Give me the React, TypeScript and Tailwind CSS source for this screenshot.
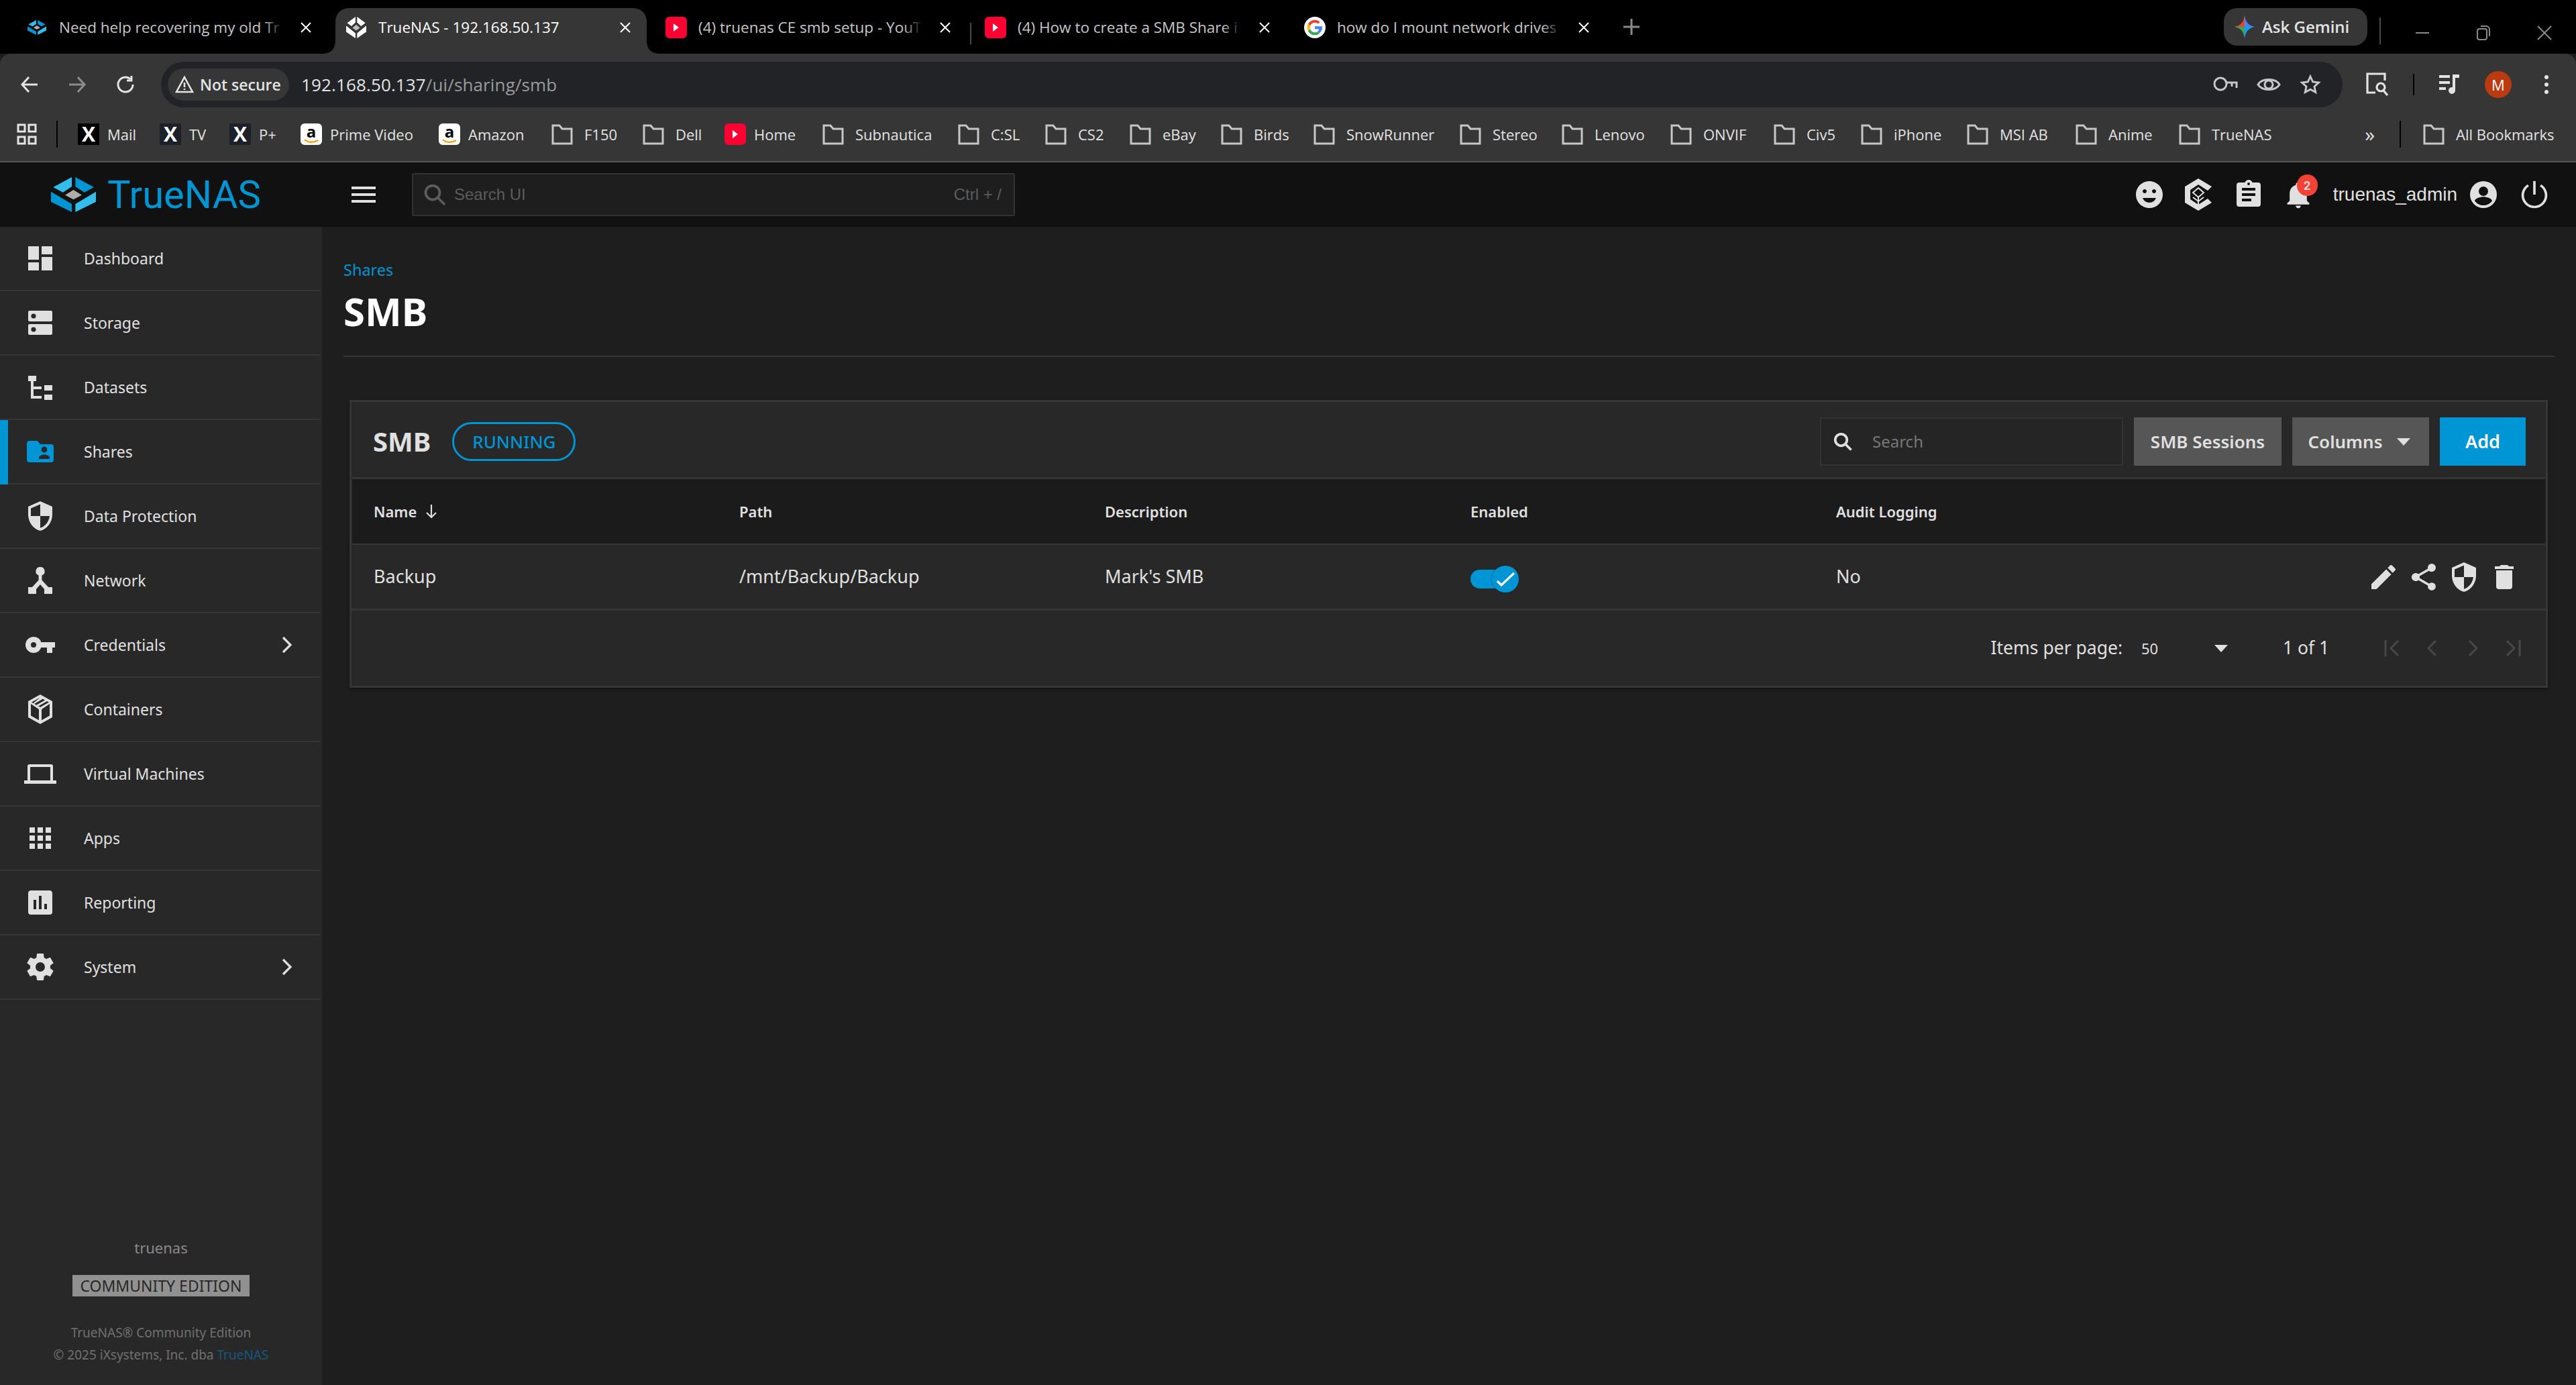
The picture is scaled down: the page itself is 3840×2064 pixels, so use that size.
import type { ReactNode } from "react";

function Svg({ size = 48, box = "0 0 24 24", className = "", children }: { size?: number; box?: string; className?: string; children: ReactNode }) {
  return (
    <svg width={size} height={size} viewBox={box} fill="currentColor" className={`shrink-0 ${className}`}>
      {children}
    </svg>
  );
}

function Logo({ w, h, tone = "brand" }: { w: number; h: number; tone?: "brand" | "white" }) {
  const a = tone === "brand" ? "#31beec" : "#ffffff";
  const b = tone === "brand" ? "#0095d5" : "#ffffff";
  const c = tone === "brand" ? "#aeadae" : "#bdbdbd";
  return (
    <svg width={w} height={h} viewBox="0 0 162 156" className="shrink-0" preserveAspectRatio="none">
      <polygon points="75,0 8,45 43,68 75,42" fill={a} />
      <polygon points="88,0 155,45 120,68 88,42" fill={b} />
      <polygon points="81,57 111,80 81,100 51,80" fill={c} />
      <polygon points="0,65 0,110 75,156 75,120" fill={b} />
      <polygon points="162,65 162,110 88,156 88,120" fill={a} />
    </svg>
  );
}

function YouTubeIcon() {
  return (
    <span className="flex h-8 w-8 shrink-0 items-center justify-center rounded-md bg-[#ff0033]">
      <span className="h-0 w-0 border-y-[6px] border-l-[8px] border-y-transparent border-l-white" />
    </span>
  );
}

function GoogleIcon() {
  return (
    <svg width="32" height="32" viewBox="0 0 48 48" className="shrink-0">
      <circle cx="24" cy="24" r="24" fill="#fff" />
      <path fill="#ea4335" d="M24 13c3 0 5.400 1 7.300 2.800l4.200-4.200C32.700 9 28.800 7 24 7c-6.600 0-12.300 3.800-15.100 9.300l4.900 3.800C15.100 16 19.200 13 24 13z" />
      <path fill="#4285f4" d="M40.600 24.500c0-1.300-.1-2.200-.3-3.200H24v6.200h9.400c-.4 2.200-1.700 4.100-3.700 5.400l4.800 3.700c2.800-2.600 6.100-6.600 6.100-12.100z" />
      <path fill="#fbbc05" d="M13.800 27.900c-.4-1.200-.6-2.500-.6-3.900s.2-2.700.6-3.900l-4.900-3.800C7.700 18.500 7 21.200 7 24s.7 5.500 1.900 7.700z" />
      <path fill="#34a853" d="M24 41c4.700 0 8.500-1.500 10.500-3.900l-4.800-3.700c-1.400 1-3.300 1.600-5.700 1.600-4.800 0-8.900-3-10.200-7.100l-4.900 3.800C11.700 37.200 17.400 41 24 41z" />
    </svg>
  );
}

function Tab({ icon, title, active = false, className = "" }: { icon: ReactNode; title: string; active?: boolean; className?: string }) {
  return (
    <div className={`relative h-[68px] w-[464px] shrink-0 ${active ? "rounded-t-[20px] bg-[#363636] text-white" : "text-[#c7c7c7]"} ${className}`}>
      {active && (
        <>
          <span className="absolute bottom-0 left-[-16px] h-4 w-4 bg-[radial-gradient(circle_at_0_0,transparent_15px,#363636_16px)]" />
          <span className="absolute bottom-0 right-[-16px] h-4 w-4 bg-[radial-gradient(circle_at_100%_0,transparent_15px,#363636_16px)]" />
        </>
      )}
      <div className="flex h-[58px] items-center">
        <div className="flex w-[64px] justify-center pr-[2px]">{icon}</div>
        <div className="relative w-[334px] whitespace-nowrap text-[22.5px]">
          {title}
          {!active && <span className="absolute inset-y-0 right-0 w-[28px] bg-gradient-to-l from-black to-transparent" />}
        </div>
        <svg width="16" height="16" viewBox="0 0 16 16" stroke="#ffffff" strokeWidth="2" fill="none" className="ml-[26px] shrink-0">
          <path d="M1 1l14 14M15 1L1 15" />
        </svg>
      </div>
    </div>
  );
}

function BookmarkFolder() {
  return (
    <svg width="32" height="32" viewBox="0 0 32 32" fill="none" stroke="#c7c7c7" strokeWidth="3" className="shrink-0">
      <path d="M2 3h10l4 5h14v22H2z" />
    </svg>
  );
}

function XIcon({ dark }: { dark?: boolean }) {
  return (
    <span className={`flex h-8 w-8 shrink-0 items-center justify-center ${dark ? "bg-[#1c2029]" : "bg-black"}`}>
      <span className="text-[30px] font-bold leading-none text-white">X</span>
    </span>
  );
}

function AmazonIcon() {
  return (
    <span className="flex h-8 w-8 shrink-0 flex-col items-center justify-start rounded-md bg-white pt-[1px]">
      <span className="text-[24px] font-bold leading-[22px] text-black">a</span>
      <svg width="24" height="7" viewBox="0 0 24 7" fill="none" stroke="#f90" strokeWidth="2.2"><path d="M2 1c6 5 13 5 20 1" /></svg>
    </span>
  );
}

const folder = <BookmarkFolder />;

const bookmarks: { icon: ReactNode; label: string; w: string }[] = [
  { icon: <XIcon />, label: "Mail", w: "w-[122px]" },
  { icon: <XIcon dark />, label: "TV", w: "w-[104px]" },
  { icon: <XIcon dark />, label: "P+", w: "w-[106px]" },
  { icon: <AmazonIcon />, label: "Prime Video", w: "w-[206px]" },
  { icon: <AmazonIcon />, label: "Amazon", w: "w-[168px]" },
  { icon: folder, label: "F150", w: "w-[136px]" },
  { icon: folder, label: "Dell", w: "w-[122px]" },
  { icon: <YouTubeIcon />, label: "Home", w: "w-[146px]" },
  { icon: folder, label: "Subnautica", w: "w-[202px]" },
  { icon: folder, label: "C:SL", w: "w-[130px]" },
  { icon: folder, label: "CS2", w: "w-[126px]" },
  { icon: folder, label: "eBay", w: "w-[136px]" },
  { icon: folder, label: "Birds", w: "w-[138px]" },
  { icon: folder, label: "SnowRunner", w: "w-[218px]" },
  { icon: folder, label: "Stereo", w: "w-[152px]" },
  { icon: folder, label: "Lenovo", w: "w-[162px]" },
  { icon: folder, label: "ONVIF", w: "w-[154px]" },
  { icon: folder, label: "Civ5", w: "w-[130px]" },
  { icon: folder, label: "iPhone", w: "w-[158px]" },
  { icon: folder, label: "MSI AB", w: "w-[162px]" },
  { icon: folder, label: "Anime", w: "w-[154px]" },
  { icon: folder, label: "TrueNAS", w: "w-[150px]" },
];

function Bookmark({ icon, label, className = "" }: { icon: ReactNode; label: string; className?: string }) {
  return (
    <div className={`flex shrink-0 items-center whitespace-nowrap text-[22px] text-[#e3e3e3] ${icon === folder ? "gap-[17px]" : "gap-[12px]"} ${className}`}>
      {icon}
      <span>{label}</span>
    </div>
  );
}

function BrowserChrome() {
  return (
    <div className="font-['Open_Sans',sans-serif]">
      {/* tab strip */}
      <div className="flex h-[80px] items-end bg-black pl-[24px]">
        <Tab icon={<Logo w={28} h={22} />} title="Need help recovering my old Tr" />
        <Tab active className="ml-[12px]" icon={<Logo w={30} h={32} tone="white" />} title="TrueNAS - 192.168.50.137" />
        <Tab className="ml-[13px]" icon={<YouTubeIcon />} title="(4) truenas CE smb setup - YouT" />
        <div className="mb-[14px] ml-[5px] mr-[5px] h-[32px] w-[2px] shrink-0 self-end bg-[#4a4a4a]" />
        <Tab icon={<YouTubeIcon />} title="(4) How to create a SMB Share i" />
        <Tab className="ml-[12px]" icon={<GoogleIcon />} title="how do I mount network drives" />
        <svg width="24" height="24" viewBox="0 0 24 24" stroke="#8a8a8a" strokeWidth="3" className="mb-[28px] ml-[27px] shrink-0"><path d="M12 0v24M0 12h24" /></svg>
        <div className="flex-1" />
        <div className="mb-[12px] flex h-[56px] w-[214px] items-center gap-[11px] rounded-[20px] bg-[#363636] pl-[16px] text-[24px] font-semibold text-[#e3e3e3]">
          <svg width="30" height="36" viewBox="0 0 30 36" className="shrink-0">
            <path d="M15 0C14 10 10 16 0 18H15z" fill="#ea4335" />
            <path d="M15 0C16 10 20 16 30 18H15z" fill="#4285f4" />
            <path d="M30 18C20 20 16 26 15 36V18z" fill="#1a9cf0" />
            <path d="M0 18C10 20 14 26 15 36V18z" fill="#34a853" />
          </svg>
          Ask Gemini
        </div>
        <div className="mb-[14px] ml-[18px] h-[40px] w-[2px] self-end bg-[#4a4a4a]" />
        <div className="mb-[30px] ml-[52px] h-[2px] w-[20px] bg-[#8a8a8a]" />
        <svg width="20" height="22" viewBox="0 0 20 22" fill="none" stroke="#8a8a8a" strokeWidth="2" className="mb-[20px] ml-[71px] shrink-0">
          <rect x="1" y="5" width="14" height="16" rx="3" />
          <path d="M6 1h8a5 5 0 0 1 5 5v10" />
        </svg>
        <svg width="22" height="22" viewBox="0 0 22 22" fill="none" stroke="#8a8a8a" strokeWidth="2" className="mb-[20px] ml-[70px] mr-[36px] shrink-0"><path d="M1 1l20 20M21 1L1 21" /></svg>
      </div>

      {/* address bar */}
      <div className="flex h-[80px] items-start rounded-t-[16px] bg-[#363636] pt-[12px]">
        <div className="flex h-[68px] w-[240px] items-center text-[#e3e3e3]">
          <svg width="28" height="28" viewBox="0 0 28 28" fill="none" stroke="currentColor" strokeWidth="3" className="ml-[30px] shrink-0"><path d="M26 14H3M13 3L3 14l10 11" /></svg>
          <svg width="28" height="28" viewBox="0 0 28 28" fill="none" stroke="#8d8d8d" strokeWidth="3" className="ml-[43px] shrink-0"><path d="M2 14h23M15 3l10 11-10 11" /></svg>
          <svg width="30" height="30" viewBox="0 0 30 30" fill="none" stroke="currentColor" strokeWidth="3" className="ml-[43px] shrink-0">
            <path d="M26 15a11 11 0 1 1-3.500-8" />
            <path d="M24 2v7h-7" />
          </svg>
        </div>
        <div className="flex h-[68px] w-[3252px] items-center rounded-full bg-[#222327] pl-[10px]">
          <div className="flex h-[48px] w-[181px] items-center gap-[9px] rounded-full bg-[#363636] pl-[11px] text-[23px] font-semibold text-[#e3e3e3]">
            <svg width="28" height="28" viewBox="0 0 28 28" fill="none" stroke="currentColor" strokeWidth="2.6" className="shrink-0">
              <path d="M14 3l12 22H2z" />
              <path d="M14 11v7M14 20v2" />
            </svg>
            Not secure
          </div>
          <div className="ml-[18px] whitespace-nowrap text-[26px] tracking-[0.13px] text-[#e3e3e3]">
            192.168.50.137<span className="text-[#9a9a9a]">/ui/sharing/smb</span>
          </div>
          <div className="flex-1" />
          <svg width="38" height="28" viewBox="0 0 38 28" fill="none" stroke="#c7c7c7" strokeWidth="3" className="shrink-0">
            <circle cx="12" cy="13" r="9" />
            <path d="M21 11h15v8M29 11v6" />
          </svg>
          <svg width="36" height="32" viewBox="0 0 36 32" fill="none" stroke="#c7c7c7" strokeWidth="3" className="ml-[28px] shrink-0">
            <path d="M2 16C8 6 28 6 34 16 28 26 8 26 2 16z" />
            <circle cx="18" cy="16" r="6" />
          </svg>
          <svg width="32" height="32" viewBox="0 0 24 24" fill="none" stroke="#c7c7c7" strokeWidth="2.2" className="ml-[28px] mr-[32px] shrink-0">
            <path d="M12 3l2.800 6 6.500.8-4.800 4.400 1.300 6.400L12 17.400l-5.800 3.200 1.300-6.400L2.700 9.800l6.500-.8z" />
          </svg>
        </div>
        <div className="flex h-[68px] flex-1 items-center text-[#e3e3e3]">
          <svg width="34" height="36" viewBox="0 0 34 36" fill="none" stroke="currentColor" strokeWidth="3.2" className="ml-[35px] shrink-0">
            <path d="M14 30H2V2h26v10" />
            <circle cx="22" cy="22" r="6" />
            <path d="M26 27l6 7" />
          </svg>
          <div className="ml-[36px] h-[32px] w-[2px] bg-black" />
          <svg width="32" height="32" viewBox="0 0 32 32" className="ml-[37px] shrink-0" fill="currentColor">
            <path d="M0 2h16v4H0zM0 11h16v4H0zM0 20h10v4H0zM20 1h10v5h-6v19a5 5 0 1 1-4-5z" />
          </svg>
          <div className="ml-[36px] flex h-10 w-10 shrink-0 items-center justify-center rounded-full bg-[#bb3a0f] text-[22px] text-white">M</div>
          <div className="ml-[49px] flex flex-col gap-[5px]">
            <span className="h-[6px] w-[6px] rounded-full bg-[#e3e3e3]" />
            <span className="h-[6px] w-[6px] rounded-full bg-[#e3e3e3]" />
            <span className="h-[6px] w-[6px] rounded-full bg-[#e3e3e3]" />
          </div>
        </div>
      </div>

      {/* bookmarks bar */}
      <div className="flex h-[82px] items-center border-b-2 border-[#585858] bg-[#363636]">
        <svg width="30" height="32" viewBox="0 0 30 32" fill="none" stroke="#e3e3e3" strokeWidth="3" className="ml-[25px] shrink-0">
          <rect x="2" y="2" width="10" height="10" />
          <rect x="18" y="2" width="10" height="10" />
          <rect x="2" y="20" width="10" height="10" />
          <rect x="18" y="20" width="10" height="10" />
        </svg>
        <div className="ml-[29px] mr-[30px] h-[40px] w-[2px] bg-black" />
        <div className="flex items-center">
          {bookmarks.map((b) => (
            <Bookmark key={b.label} icon={b.icon} label={b.label} className={b.w} />
          ))}
        </div>
        <div className="flex-1" />
        <span className="text-[30px] leading-none text-[#e3e3e3]">»</span>
        <div className="ml-[37px] mr-[33px] h-[40px] w-[2px] bg-black" />
        <Bookmark icon={folder} label="All Bookmarks" className="w-[228px]" />
      </div>
    </div>
  );
}

function TrueCommandIcon() {
  return (
    <svg width="40" height="48" viewBox="0 0 40 48" className="shrink-0" fill="none">
      <path d="M20 0l20 12-6 6-14-9-12 8v14l12 8 14-9 6 6-20 12L0 36V12z" fill="#e0e0e0" />
      <path d="M20 14l8 7-8 7-8-7zM20 28v12M20 34l-8-6M20 34l8-6" stroke="#e0e0e0" strokeWidth="2" />
    </svg>
  );
}

function TopBar() {
  return (
    <div className="flex h-[96px] items-center bg-[#111111] font-['Liberation_Sans',sans-serif] text-[#e0e0e0]">
      <div className="flex w-[524px] shrink-0 items-center pl-[76px]">
        <Logo w={67} h={52} />
        <span className="ml-[17px] font-['Roboto',sans-serif] text-[58px] leading-none text-[#0095d5]">TrueNAS</span>
      </div>
      <div className="flex w-[36px] flex-col gap-[6px]">
        <span className="h-[4px] bg-[#e0e0e0]" />
        <span className="h-[4px] bg-[#e0e0e0]" />
        <span className="h-[4px] bg-[#e0e0e0]" />
      </div>
      <div className="ml-[54px] flex h-[64px] w-[899px] items-center rounded-[3px] border-2 border-[#333] bg-[#1e1e1e] pl-[14px] pr-[18px] text-[24px] text-[#5c5c5c]">
        <svg width="36" height="40" viewBox="0 0 24 24" fill="none" stroke="#5c5c5c" strokeWidth="2.5" className="shrink-0">
          <circle cx="10" cy="10" r="7" />
          <path d="M15 15l7 7" />
        </svg>
        <span className="ml-[11px] flex-1">Search UI</span>
        <span>Ctrl + /</span>
      </div>
      <div className="flex-1" />
      <div className="flex items-center">
        <Svg>
          <path d="M12 2C6.470 2 2 6.470 2 12s4.470 10 10 10a10 10 0 0 0 10-10C22 6.470 17.500 2 12 2zM7 9.500C7 8.700 7.700 8 8.500 8s1.500.7 1.500 1.500S9.300 11 8.500 11 7 10.300 7 9.500zM12 18a5.500 5.500 0 0 1-5-3.500h10A5.500 5.500 0 0 1 12 18zm3.500-7c-.8 0-1.500-.7-1.500-1.500S14.700 8 15.500 8s1.500.7 1.500 1.500-.7 1.500-1.500 1.500z" />
        </Svg>
        <div className="ml-[29px]"><TrueCommandIcon /></div>
        <Svg className="ml-[31px]">
          <path d="M17 9H7V7h10zm0 4H7v-2h10zm-3 4H7v-2h7zM12 3a1 1 0 1 1 0 2 1 1 0 0 1 0-2zm7 0h-4.180C14.400 1.840 13.300 1 12 1s-2.400.84-2.820 2H5a2 2 0 0 0-2 2v14a2 2 0 0 0 2 2h14a2 2 0 0 0 2-2V5a2 2 0 0 0-2-2z" />
        </Svg>
        <div className="relative ml-[28px]">
          <Svg size={44}>
            <path d="M21 19v1H3v-1l2-2v-6c0-3.100 2.030-5.830 5-6.710V4a2 2 0 0 1 4 0v.29c2.970.88 5 3.610 5 6.710v6zm-7 2a2 2 0 0 1-4 0" />
          </Svg>
          <span className="absolute left-[20px] top-[-8px] flex h-[32px] w-[31px] items-center justify-center rounded-full bg-[#f44336] font-['Roboto',sans-serif] text-[18px] font-bold text-[#ffd9d6]">2</span>
        </div>
        <span className="ml-[30px] text-[28px] leading-none">truenas_admin</span>
        <Svg className="ml-[15px]">
          <path fillRule="evenodd" d="M12 2a10 10 0 1 0 0 20 10 10 0 0 0 0-20zm0 4a3.500 3.500 0 1 1 0 7 3.500 3.500 0 0 1 0-7zm0 14a8 8 0 0 1-6.500-3.300c.2-2 4.400-3.100 6.500-3.100s6.300 1.100 6.500 3.100A8 8 0 0 1 12 20z" />
        </Svg>
        <svg width="44" height="44" viewBox="0 0 24 24" fill="none" stroke="currentColor" strokeWidth="2" className="ml-[30px] mr-[40px] shrink-0">
          <path d="M12 1v11" />
          <path d="M7 4.500a9.500 9.500 0 1 0 10 0" />
        </svg>
      </div>
    </div>
  );
}

const shieldPath = "M12 12h7c-.53 4.110-3.280 7.780-7 8.920V12H5V6.300l7-3.110M12 1L3 5v6c0 5.550 3.840 10.730 9 12 5.160-1.270 9-6.450 9-12V5z";

const navItems: { label: string; icon: ReactNode; active?: boolean; arrow?: boolean }[] = [
  { label: "Dashboard", icon: <path d="M13 3v6h8V3M13 21h8V11h-8M3 21h8v-6H3M3 13h8V3H3z" /> },
  { label: "Storage", icon: <path fillRule="evenodd" d="M4 3h16a1 1 0 0 1 1 1v6a1 1 0 0 1-1 1H4a1 1 0 0 1-1-1V4a1 1 0 0 1 1-1zm3 5.800a1.800 1.800 0 1 0 0-3.600 1.800 1.800 0 0 0 0 3.600zM4 13h16a1 1 0 0 1 1 1v6a1 1 0 0 1-1 1H4a1 1 0 0 1-1-1v-6a1 1 0 0 1 1-1zm3 5.800a1.800 1.800 0 1 0 0-3.600 1.800 1.800 0 0 0 0 3.600z" /> },
  { label: "Datasets", icon: <path d="M3 3.500h6v4H3zM15 10.500h6v4h-6zM15 17.500h6v4h-6zM5 7.500h2v4h6v2H7v5h6v2H5z" /> },
  { label: "Shares", active: true, icon: <path fillRule="evenodd" d="M4 4h6l2 2.500h8a2 2 0 0 1 2 2V18a2 2 0 0 1-2 2H4a2 2 0 0 1-2-2V6a2 2 0 0 1 2-2zm11 4.300a2.200 2.200 0 1 0 0 4.400 2.200 2.200 0 0 0 0-4.400zM11 17.500h8v-1c0-1.400-2.500-2.200-4-2.200s-4 .8-4 2.200z" /> },
  { label: "Data Protection", icon: <path d={shieldPath} /> },
  { label: "Network", icon: <path d="M12 2a3.200 3.200 0 0 1 1.200 6.200v3.500L18 17h3v5h-6v-3.500l-3-3.500-3 3.500V22H3v-5h3l4.800-5.300V8.200A3.200 3.200 0 0 1 12 2z" /> },
  { label: "Credentials", arrow: true, icon: <path d="M7 14a2 2 0 1 1 0-4 2 2 0 0 1 0 4m5.650-4A6 6 0 0 0 7 6a6 6 0 0 0 0 12 6 6 0 0 0 5.650-4H17v4h4v-4h2v-4z" /> },
  { label: "Containers", icon: <path fillRule="evenodd" d="M12 1l9 5v12l-9 5-9-5V6zm-7 7v8.800l6 3.300V12zm14 0l-6 4v8.100l6-3.300zM12 3.300L5.500 6.800 12 10.500l6.500-3.700-1.500-.8-6.500 3.700-1.500-.8 6.500-3.700-1.500-.9-6.500 3.700-.8-.5z" /> },
  { label: "Virtual Machines", icon: <path fillRule="evenodd" d="M4 5h16a1.500 1.500 0 0 1 1.500 1.500V17H24v2.500H0V17h2.500V6.500A1.500 1.500 0 0 1 4 5zm.5 2v10h15V7z" /> },
  { label: "Apps", icon: <path d="M16 20h4v-4h-4M16 14h4v-4h-4M10 8h4V4h-4M16 8h4V4h-4M10 14h4v-4h-4M4 14h4v-4H4M4 20h4v-4H4M10 20h4v-4h-4M4 8h4V4H4z" /> },
  { label: "Reporting", icon: <path d="M17 17h-2v-4h2m-4 4h-2V7h2m-4 10H7v-7h2m10-7H5c-1.110 0-2 .89-2 2v14a2 2 0 0 0 2 2h14a2 2 0 0 0 2-2V5c0-1.110-.9-2-2-2z" /> },
  { label: "System", arrow: true, icon: <path d="M12 15.500A3.500 3.500 0 0 1 8.500 12 3.500 3.500 0 0 1 12 8.500a3.500 3.500 0 0 1 3.500 3.500 3.500 3.500 0 0 1-3.500 3.500m7.430-2.530c.04-.32.07-.64.07-.97 0-.33-.03-.66-.07-1l2.110-1.630c.19-.15.24-.42.12-.64l-2-3.460c-.12-.22-.39-.31-.61-.22l-2.490 1c-.52-.39-1.060-.73-1.690-.98l-.37-2.650A.506.506 0 0 0 14 2h-4c-.25 0-.46.18-.5.420l-.37 2.650c-.63.25-1.170.59-1.690.98l-2.490-1c-.22-.09-.49 0-.61.22l-2 3.460c-.13.22-.07.49.12.64L4.570 11c-.04.34-.07.67-.07 1 0 .33.03.65.07.97l-2.110 1.660c-.19.15-.25.42-.12.64l2 3.460c.12.22.39.3.61.22l2.490-1.010c.52.4 1.060.74 1.690.99l.37 2.650c.04.24.25.42.5.42h4c.25 0 .46-.18.5-.42l.37-2.650c.63-.26 1.170-.59 1.690-.99l2.490 1.010c.22.08.49 0 .61-.22l2-3.460c.12-.22.07-.49-.12-.64z" /> },
];

function Sidebar() {
  return (
    <aside className="flex w-[480px] shrink-0 flex-col bg-[#282828] font-['Noto_Sans',sans-serif] text-[#e0e0e0]">
      {navItems.map((item) => (
        <div key={item.label} className="relative mr-[2px] flex h-[96px] items-center border-b-2 border-[#363636]">
          {item.active && <span className="absolute bottom-[-2px] left-0 top-0 w-[12px] bg-[#0095d5]" />}
          <Svg className={`ml-[36px] ${item.active ? "text-[#0095d5]" : "text-[#e0e0e0]"}`}>{item.icon}</Svg>
          <span className="ml-[41px] text-[23px]">{item.label}</span>
          {item.arrow && (
            <svg width="16" height="26" viewBox="0 0 16 26" fill="none" stroke="#e0e0e0" strokeWidth="3.2" className="absolute right-[42px]"><path d="M2 2l11 11L2 24" /></svg>
          )}
        </div>
      ))}
      <div className="flex flex-1 flex-col items-center justify-end pb-[28px]">
        <div className="text-[22px] text-[#8a8a8a]">truenas</div>
        <div className="mt-[24px] flex h-[32px] w-[264px] items-center justify-center bg-[#919191] text-[23px] text-[#282828]">COMMUNITY EDITION</div>
        <div className="mt-[38px] text-[19px] leading-[33px] text-[#707070]">TrueNAS® Community Edition</div>
        <div className="text-[19px] leading-[33px] text-[#707070]">© 2025 iXsystems, Inc. dba <span className="text-[#15587f]">TrueNAS</span></div>
      </div>
    </aside>
  );
}

function HeaderCell({ children }: { children: ReactNode }) {
  return <div className="flex w-[545px] items-center gap-[12px] text-[22px] font-semibold text-[#e0e0e0]">{children}</div>;
}

function BodyCell({ children }: { children: ReactNode }) {
  return <div className="flex w-[545px] items-center text-[27px] text-[#e0e0e0]">{children}</div>;
}

function Toggle() {
  return (
    <div className="relative mt-[6px] h-[28px] w-[56px] rounded-full bg-[#0095d5]">
      <span className="absolute left-[32px] top-[-6px] flex h-[40px] w-[40px] items-center justify-center rounded-full bg-[#0095d5] shadow-[-1px_0_2px_rgba(0,0,0,0.25)]">
        <svg width="40" height="40" viewBox="0 0 40 40" fill="none" stroke="#ffffff" strokeWidth="3.2"><path d="M8 23l6 6 19-18" /></svg>
      </span>
    </div>
  );
}

function PageArrow({ d }: { d: string }) {
  return (
    <svg width="26" height="26" viewBox="0 0 26 26" fill="none" stroke="currentColor" strokeWidth="3"><path d={d} /></svg>
  );
}

function SmbCard() {
  return (
    <div className="ml-[9px] mr-[42px] mt-[64px] border-[3px] border-[#363636] bg-[#282828] shadow-[0_2px_4px_rgba(0,0,0,0.4)]">
      <div className="flex h-[112px] items-center pl-[32px] pr-[30px] pt-[6px]">
        <span className="text-[40px] font-bold leading-none text-[#e0e0e0]">SMB</span>
        <span className="ml-[32px] flex h-[58px] w-[184px] items-center justify-center rounded-full border-[3px] border-[#0095d5] text-[26px] font-medium text-[#0095d5]">RUNNING</span>
        <div className="flex-1" />
        <div className="flex h-[72px] w-[452px] items-center border-2 border-[#333] bg-[#252525] pl-[17px]">
          <svg width="30" height="30" viewBox="0 0 24 24" fill="none" stroke="#e0e0e0" strokeWidth="3"><circle cx="10" cy="10" r="7" /><path d="M15 15l7 7" /></svg>
          <span className="ml-[29px] text-[24px] text-[#777]">Search</span>
        </div>
        <div className="ml-[16px] flex h-[72px] w-[220px] items-center justify-center bg-[#565656] text-[26px] font-semibold text-[#e0e0e0]">SMB Sessions</div>
        <div className="ml-[16px] flex h-[72px] w-[204px] items-center justify-center gap-[22px] bg-[#565656] pr-[4px] text-[26px] font-semibold text-[#e0e0e0]">
          Columns
          <span className="h-0 w-0 border-x-[10px] border-t-[11px] border-x-transparent border-t-[#e0e0e0]" />
        </div>
        <div className="ml-[16px] flex h-[72px] w-[128px] items-center justify-center bg-[#0095d5] text-[27px] font-semibold text-white">Add</div>
      </div>
      <div className="mx-[1px] border-b-2 border-t-[3px] border-[#363636]">
        <div className="flex h-[96px] items-center bg-[#1b1b1b] pl-[32px]">
          <HeaderCell>
            Name
            <svg width="20" height="24" viewBox="0 0 20 24" fill="none" stroke="#e0e0e0" strokeWidth="2.2"><path d="M10 2v19M3 14l7 7 7-7" /></svg>
          </HeaderCell>
          <HeaderCell>Path</HeaderCell>
          <HeaderCell>Description</HeaderCell>
          <HeaderCell>Enabled</HeaderCell>
          <HeaderCell>Audit Logging</HeaderCell>
        </div>
      </div>
      <div className="flex h-[98px] items-center border-b-[3px] border-[#363636] pl-[33px]">
        <BodyCell>Backup</BodyCell>
        <BodyCell>/mnt/Backup/Backup</BodyCell>
        <BodyCell>Mark's SMB</BodyCell>
        <BodyCell><Toggle /></BodyCell>
        <BodyCell>No</BodyCell>
        <div className="ml-auto flex items-center gap-[12px] pr-[38px] text-[#e0e0e0]">
          <Svg><path d="M3 17.250V21h3.750L17.800 9.940l-3.750-3.750zM20.700 7.040a1 1 0 0 0 0-1.410l-2.340-2.340a1 1 0 0 0-1.410 0l-1.830 1.830 3.750 3.750z" /></Svg>
          <Svg><path d="M18 16.080c-.76 0-1.440.3-1.960.77L8.910 12.700c.05-.23.09-.46.09-.7 0-.24-.04-.47-.09-.7l7.050-4.110c.54.5 1.250.81 2.040.81a3 3 0 1 0-3-3c0 .24.04.47.09.7L8.040 9.810A3 3 0 1 0 6 15c.79 0 1.500-.31 2.040-.81l7.120 4.150c-.05.21-.08.43-.08.66 0 1.610 1.310 2.910 2.920 2.910s2.920-1.300 2.920-2.910A2.920 2.920 0 0 0 18 16.080z" /></Svg>
          <Svg><path d={shieldPath} /></Svg>
          <Svg><path d="M19 4h-3.500l-1-1h-5l-1 1H5v2h14M6 19a2 2 0 0 0 2 2h8a2 2 0 0 0 2-2V7H6z" /></Svg>
        </div>
      </div>
      <div className="flex h-[112px] items-center justify-end text-[26.5px] text-[#e0e0e0]">
        <span>Items per page:</span>
        <span className="ml-[28px] w-[109px] text-[22px]">50</span>
        <span className="h-0 w-0 border-x-[10px] border-t-[11px] border-x-transparent border-t-[#e0e0e0]" />
        <span className="ml-[82px] w-[71px] whitespace-nowrap">1 of 1</span>
        <div className="ml-[79px] mr-[36px] flex items-center gap-[34px] text-[#484848]">
          <PageArrow d="M3 1v24M22 2L11 13l11 11" />
          <PageArrow d="M18 2L7 13l11 11" />
          <PageArrow d="M8 2l11 11L8 24" />
          <PageArrow d="M4 2l11 11L4 24M23 1v24" />
        </div>
      </div>
    </div>
  );
}

export default function App() {
  return (
    <div className="flex h-[2064px] w-[3840px] flex-col overflow-hidden bg-[#1e1e1e]">
      <BrowserChrome />
      <TopBar />
      <div className="flex min-h-0 flex-1">
        <Sidebar />
        <main className="min-w-0 flex-1 pl-[32px] pt-[49px] font-['Noto_Sans',sans-serif]">
          <div className="text-[23.5px] leading-[30px] text-[#0095d5]">Shares</div>
          <h1 className="mt-[11px] text-[58px] font-bold leading-[72px] text-white">SMB</h1>
          <div className="mr-[32px] mt-[30px] h-[2px] bg-[#363636]" />
          <SmbCard />
        </main>
      </div>
    </div>
  );
}
